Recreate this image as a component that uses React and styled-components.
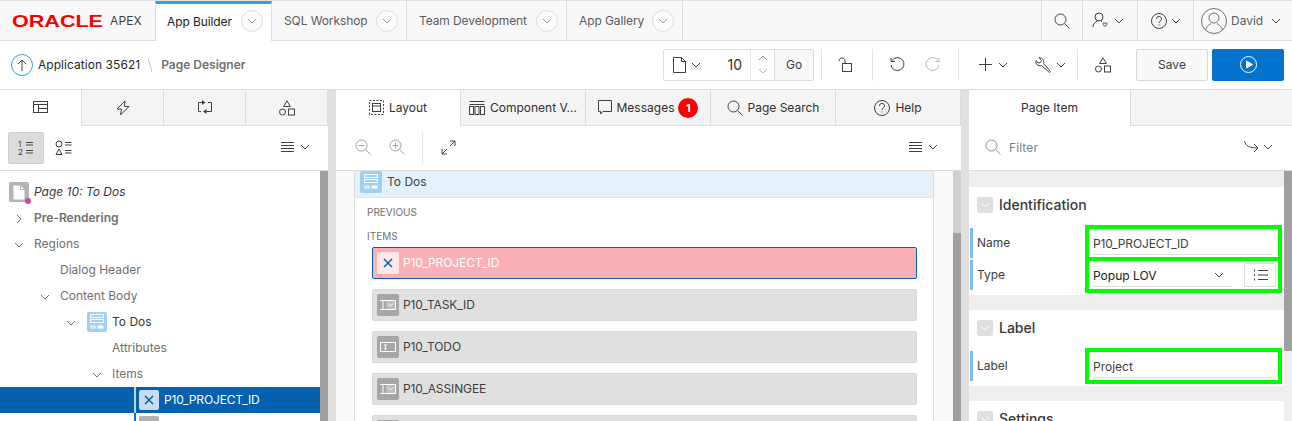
import React from "react";
import styled, { createGlobalStyle } from "styled-components";

const Global = createGlobalStyle`
  html, body { margin: 0; padding: 0; background: #fff; }
  body { font-family: Inter, "Liberation Sans", sans-serif; font-size: 12px; color: #404040; }
  * { box-sizing: border-box; }
`;

const Page = styled.div`
  width: 1292px; height: 421px; overflow: hidden; display: flex; flex-direction: column; background: #fff;
`;

/* ---------- icons ---------- */
const Svg = styled.svg`
  display: block; flex: none; fill: none; stroke: ${p => p.$c || "#404040"}; stroke-width: 1;
`;
const I = ({ w = 16, h = 16, c, children }) => (
  <Svg width={w} height={h} viewBox={`0 0 ${w} ${h}`} $c={c}>{children}</Svg>
);
const Chevron = ({ c, dir = "down" }) => (
  <I w={10} h={10} c={c}>
    {dir === "down" && <path d="M1 3l4 4 4-4" />}
    {dir === "right" && <path d="M3 1l4 4-4 4" />}
    {dir === "up" && <path d="M1 7l4-4 4 4" />}
  </I>
);
const Search = ({ c, sign }) => (
  <I w={16} h={16} c={c}>
    <circle cx="6.5" cy="6.5" r="5.5" /><path d="M10.5 10.5l5 5" />
    {sign && <path d="M3.500 6.500h6" />}
    {sign === "+" && <path d="M6.500 3.500v6" />}
  </I>
);
const Lines = () => (
  <I w={13} h={11}><path d="M0 .5h13M0 3.5h13M0 6.5h13M0 9.5h13" /></I>
);
const Shapes = () => (
  <I w={16} h={16}><path d="M8 .8l3.4 5.7H4.6z" /><circle cx="3.5" cy="12" r="3" /><rect x="9.5" y="9" width="6" height="6" /></I>
);
const RegionIcon = () => (
  <I w={16} h={16} c="#fff">
    <rect x="1.5" y=".5" width="13" height="3" /><rect x="1.5" y="5.5" width="13" height="3" />
    <rect x="2" y="12" width="4" height="2" /><rect x="9" y="12" width="5" height="2" fill="#fff" />
  </I>
);
const CrossIcon = ({ c = "#0560b0" }) => (
  <I w={12} h={12} c={c}><path d="M2 2l8 8M10 2l-8 8" strokeWidth="1.5" /></I>
);
const SelectIcon = () => (
  <I w={16} h={10} c="#fff">
    <path d="M0 .5h15.500v9H0M3 .5v9" />
    <rect x="6" y="1" width="9" height="8" fill="#fff" fillOpacity=".25" stroke="none" />
    <path d="M8 3.500l2.500 2.500L13 3.500" />
  </I>
);
const TextIcon = () => (
  <I w={16} h={10} c="#fff"><rect x=".5" y=".5" width="15" height="9" /><path d="M4 3h3M4 7h3M5.5 3v4" /></I>
);
const Numeral = styled.text`
  font-family: Inter, sans-serif; font-size: 8px; fill: #404040; stroke: none;
`;

/* ---------- top bar ---------- */
const TopBar = styled.header`
  display: flex; height: 41px; flex: none; background: #f8f8f8;
  border-top: 1px solid #dfe0e4; border-bottom: 1px solid #dcdcdc;
`;
const LogoBox = styled.div`
  width: 155px; display: flex; align-items: center; padding-left: 12px; gap: 7px;
`;
const LogoText = styled.text`
  fill: #f80000; stroke: none; font-family: "Liberation Sans", sans-serif; font-weight: 700; font-size: 16.5px;
`;
const ApexLabel = styled.span`
  font-size: 12px; color: #404040; letter-spacing: .1px;
`;
const NavTab = styled.div`
  width: ${p => p.$w}px; flex: none; display: flex; align-items: center; justify-content: space-between;
  padding: 0 8px 0 ${p => p.$pl}px; border-right: 1px solid #dcdcdc; border-left: ${p => p.$active ? "1px solid #dcdcdc" : "0"};
  font-size: 12px; letter-spacing: -.1px;
  color: ${p => p.$active ? "#202020" : "#5c5c5c"};
  background: ${p => p.$active ? "#fff" : "transparent"};
  border-top: ${p => p.$active ? "3px solid #3a9ee6" : "0"};
  margin-bottom: ${p => p.$active ? "-1px" : "0"};
  padding-bottom: ${p => p.$active ? "3px" : "0"};
`;
const CircleBtn = styled.span`
  width: 22px; height: 22px; border: 1px solid #dcdcdc; border-radius: 50%; background: #fbfbfb;
  display: flex; align-items: center; justify-content: center; flex: none;
`;
const Grow = styled.div`flex: 1;`;
const NavTool = styled.div`
  width: ${p => p.$w}px; flex: none; display: flex; align-items: center; justify-content: ${p => p.$start ? "flex-start" : "center"}; gap: ${p => p.$gap ?? 4}px;
  padding-left: ${p => p.$pl || 0}px; padding-right: ${p => p.$pr || 0}px;
  border-left: 1px solid #dcdcdc; color: #5c5c5c; font-size: 12px;
`;

/* ---------- page toolbar ---------- */
const ActionBar = styled.div`
  display: flex; align-items: center; height: 49px; flex: none; border-bottom: 1px solid #dcdcdc; padding: 0 8px 1px 11px; background: #fff;
`;
const Crumb = styled.span`
  font-size: 12px; color: #262626; margin-left: 5px; letter-spacing: .05px;
`;
const CrumbSep = styled.span`
  width: 7px; margin: 0 7px 0 7px; display: flex;
`;
const CrumbCurrent = styled.span`
  font-size: 12px; font-weight: 600; color: #707070;
`;
const PageNav = styled.div`
  display: flex; height: 32px; width: 151px; border: 1px solid #dcdcdc; border-radius: 2px; align-items: stretch;
`;
const PageType = styled.div`
  width: 54px; flex: none; display: flex; align-items: center; padding: 0 0 0 9px; gap: 5px;
`;
const PageNumber = styled.div`
  width: 24px; text-align: right; align-self: center; font-size: 14px; color: #303030;
`;
const Spin = styled.div`
  width: 24px; margin-left: 8px; border-left: 1px solid #e8e8e8; display: flex; flex-direction: column; align-items: center; justify-content: center; gap: 3px;
`;
const GoBtn = styled.div`
  flex: 1; border-left: 1px solid #dcdcdc; background: #f8f8f8; display: flex; align-items: center; justify-content: center; font-size: 12px; color: #404040;
`;
const ToolGroup = styled.div`
  width: ${p => p.$w}px; height: 32px; flex: none; display: flex; align-items: center; border-left: 1px solid #e2e2e2;
  padding-left: ${p => p.$pl}px; gap: ${p => p.$gap || 0}px; margin-left: ${p => p.$ml || 0}px;
`;
const ToolPair = styled.span`
  display: flex; align-items: center; gap: ${p => p.$gap || 6}px;
`;
const SaveBtn = styled.div`
  width: 72px; height: 32px; border: 1px solid #d8d8d8; border-radius: 2px; background: #f8f8f8; display: flex; align-items: center; justify-content: center; font-size: 12px; color: #404040; margin: 0 4px 0 8px; flex: none;
`;
const RunBtn = styled.div`
  width: 72px; height: 32px; background: #0572ce; border-radius: 2px; display: flex; align-items: center; justify-content: center; flex: none;
`;

/* ---------- panels ---------- */
const Panels = styled.main`
  flex: 1; display: flex; min-height: 0;
`;
const Panel = styled.section`
  width: ${p => p.$w}px; flex: none; display: flex; flex-direction: column; min-height: 0;
`;
const Splitter = styled.div`
  width: 8px; flex: none; background: #e0e0e0;
`;
const TabStrip = styled.div`
  display: flex; height: 36px; flex: none; background: #f4f4f4; border-bottom: 1px solid #dcdcdc;
`;
const PanelTab = styled.div`
  width: ${p => p.$w}px; flex: none; display: flex; align-items: center; justify-content: center; gap: 5px;
  border-right: 1px solid #dcdcdc; font-size: 12px; color: #303030;
  ${p => p.$active && "background:#fff; height:36px; padding-bottom:1px;"}
`;
const Badge = styled.span`
  width: 20px; height: 20px; border-radius: 50%; background: #f00; color: #fff; font-weight: 700; font-size: 11px; margin-left: -1px;
  display: flex; align-items: center; justify-content: center;
`;
const Toolbar = styled.div`
  height: 45px; flex: none; display: flex; align-items: center; border-bottom: 1px solid #dcdcdc; padding: 0 ${p => p.$pr ?? 18}px 2px ${p => p.$pl ?? 8}px; background: #fff;
`;
const ToggleBtn = styled.div`
  width: 36px; height: 32px; border-radius: 2px; background: ${p => p.$on ? "#dcdcdc" : "transparent"}; border: 1px solid ${p => p.$on ? "#cfcfcf" : "transparent"};
  display: flex; align-items: center; justify-content: center; margin: 2px 1px 0 0;
`;
const ToolSep = styled.div`
  width: 1px; height: 32px; background: #e2e2e2; margin: 2px ${p => p.$r}px 0 ${p => p.$l}px;
`;
const IconSlot = styled.span`
  margin-right: ${p => p.$mr || 0}px; display: flex;
`;
const Scrollbar = styled.div`
  width: 8px; flex: none; display: flex; flex-direction: column; background: ${p => p.$bg || "#a0a0a0"};
`;
const ScrollPart = styled.div`
  height: ${p => p.$h}px; flex: none; background: ${p => p.$c};
`;

/* ---------- tree ---------- */
const TreeWrap = styled.div`
  flex: 1; display: flex; min-height: 0;
`;
const Tree = styled.div`
  flex: 1; padding-top: 8px; overflow: hidden; background: #fff;
`;
const TreeRow = styled.div`
  height: 26px; display: flex; align-items: center; padding: 0 0 2px ${p => p.$pad}px; font-size: 12px;
  letter-spacing: ${p => p.$caps ? "-.15px" : "0"};
  color: ${p => p.$sel ? "#fff" : p.$dark ? "#383838" : "#707070"};
  background: ${p => p.$sel ? "#0560b0" : "transparent"};
  font-style: ${p => p.$italic ? "italic" : "normal"};
  font-weight: ${p => p.$bold ? 600 : 400};
`;
const Twist = styled.span`
  width: 26px; height: 100%; flex: none; display: flex; align-items: center; justify-content: center; padding: 3px 4px 0 0;
`;
const Guide = styled.span`
  width: 24px; height: 26px; align-self: flex-start; flex: none; margin-right: 3px; border-right: 2px solid ${p => p.$c};
`;
const NodeIcon = styled.span`
  width: 20px; height: 20px; flex: none; border-radius: 2px; background: ${p => p.$c}; display: flex; align-items: center; justify-content: center; margin: 2px 5px 0 ${p => p.$ml || 0}px; position: relative;
`;
const Dot = styled.span`
  position: absolute; right: -2px; bottom: -2px; width: 6px; height: 6px; border-radius: 50%; background: #c74b9a;
`;

/* ---------- layout canvas ---------- */
const CanvasWrap = styled.div`
  flex: 1; display: flex; min-height: 0;
`;
const Canvas = styled.div`
  flex: 1; background: #f9f9f9; padding: 0 19px 0 18px; overflow: hidden;
`;
const RegionCard = styled.div`
  background: #fff; border: 1px solid #dcdcdc; border-top: 0; height: 400px;
`;
const RegionHead = styled.div`
  height: 27px; background: #e4f1fb; border-bottom: 1px solid #d8e6f1; display: flex; align-items: flex-start; padding-left: 5px; gap: 5px; font-size: 12px; color: #404040;
`;
const RegionText = styled.span`line-height: 21px;`;
const HeadIcon = styled.span`
  width: 22px; height: 22px; border-radius: 2px; background: #a0d0f5; display: flex; align-items: center; justify-content: center;
`;
const SlotLabel = styled.div`
  font-size: 10px; color: #707070; padding-left: 12px; line-height: 12px; margin-top: ${p => p.$mt}px;
`;
const Items = styled.div`
  display: flex; flex-direction: column; gap: 10px; padding: 5px 16px 0 17px;
`;
const ItemCard = styled.div`
  height: 32px; flex: none; border-radius: 2px; display: flex; align-items: center; padding: 0 0 2px 4px; gap: 4px; font-size: 12px; letter-spacing: -.1px;
  background: ${p => p.$sel ? "#fab0b4" : "#e0e0e0"};
  border: 1px solid ${p => p.$sel ? "#0560b0" : "#d8d8d8"};
  color: ${p => p.$sel ? "#fff" : "#404040"};
`;
const ItemIcon = styled.span`
  width: 22px; height: 22px; margin-top: 2px; border-radius: 2px; background: ${p => p.$sel ? "#fde8e9" : "#a6a6a6"}; display: flex; align-items: center; justify-content: center; flex: none;
`;

/* ---------- properties ---------- */
const PropsWrap = styled.div`
  flex: 1; display: flex; min-height: 0;
`;
const Props = styled.div`
  flex: 1; background: #eee; padding-top: 16px; display: flex; flex-direction: column; gap: 15px; overflow: hidden;
`;
const Group = styled.div`
  background: #fff; padding-bottom: 4px; flex: none;
`;
const GroupHead = styled.div`
  height: 40px; display: flex; align-items: flex-start; padding: 10px 0 0 8px; gap: 6px; font-size: 14px; font-weight: 500; color: #383838;
`;
const GroupTitle = styled.span`line-height: 16px;`;
const Collapse = styled.span`
  width: 16px; height: 16px; border-radius: 2px; background: #dedede; display: flex; align-items: center; justify-content: center;
`;
const PropRow = styled.div`
  height: 32px; display: flex; align-items: center; padding: 0 6px 0 1px;
`;
const Mark = styled.span`
  width: 3px; height: 30px; background: #7fbcea; flex: none;
`;
const PropLabel = styled.label`
  flex: 1; padding-left: 4px; font-size: 12px; color: #404040; margin-top: -1px;
`;
const Field = styled.div`
  width: 189px; height: 28px; outline: 4px solid #00ff00; display: flex; align-items: flex-start; padding: 0 ${p => p.$pr ?? 6}px 0 4px; gap: 12px; font-size: 12px; color: #404040; position: relative; z-index: ${p => p.$z || 0}; background: #fff;
`;
const Value = styled.div`
  flex: 1; border-bottom: 1px solid #e0e0e0; display: flex; align-items: center; justify-content: space-between; height: 26px; padding: 3px 8px 0 0; letter-spacing: ${p => p.$caps ? "-.15px" : "0"}; color: ${p => p.$dark ? "#202020" : "#404040"};
`;
const ListBtn = styled.div`
  width: 32px; height: 24px; margin-top: 2px; border: 1px solid #dcdcdc; border-radius: 2px; display: flex; align-items: center; justify-content: center; flex: none;
`;
const FilterText = styled.span`
  font-size: 12px; color: #808080; margin-left: 8px; letter-spacing: .1px;
`;

/* ---------- app ---------- */
const NAV = [
  { t: "App Builder", w: 117, pl: 11, active: true },
  { t: "SQL Workshop", w: 135, pl: 12 },
  { t: "Team Development", w: 160, pl: 12 },
  { t: "App Gallery", w: 116, pl: 12 },
];
const MenuChevron = () => (
  <ToolPair $gap={6}><Lines /><Chevron /></ToolPair>
);

export default function App() {
  return (
    <Page>
      <Global />
      <TopBar>
        <LogoBox>
          <svg width="91" height="16" viewBox="0 0 91 16">
            <LogoText x="0" y="14" textLength="91" lengthAdjust="spacingAndGlyphs">ORACLE</LogoText>
          </svg>
          <ApexLabel>APEX</ApexLabel>
        </LogoBox>
        {NAV.map(n => (
          <NavTab key={n.t} $w={n.w} $pl={n.pl} $active={n.active}>
            {n.t}
            <CircleBtn><Chevron c="#9a9a9a" /></CircleBtn>
          </NavTab>
        ))}
        <Grow />
        <NavTool $w={41}><Search /></NavTool>
        <NavTool $w={55} $pr={4}>
          <I w={18} h={18}>
            <circle cx="7" cy="5" r="4" /><path d="M1 15c0-3 2-5 4.500-6M9 9l1 1" />
            <path d="M13 11.500c1-1.500 3 0 1.500 1.500L13 14.500 11.500 13c-1.500-1.500 .5-3 1.500-1.500z" />
          </I>
          <Chevron />
        </NavTool>
        <NavTool $w={56}>
          <I w={16} h={16}><circle cx="8" cy="8" r="7.500" /><path d="M5.500 6c0-3.500 5-3.500 5 0 0 2-2.500 2-2.500 4M8 11.500v1" /></I>
          <Chevron />
        </NavTool>
        <NavTool $w={99} $gap={4} $start $pl={7}>
          <I w={26} h={26} c="#707070">
            <circle cx="13" cy="13" r="12.500" /><circle cx="13" cy="10" r="5" /><path d="M4.500 22c1-4 4-5.500 5.500-6.500M21.500 22c-1-4-4-5.500-5.500-6.500" />
          </I>
          David
          <IconSlot style={{ marginLeft: 4 }}><Chevron /></IconSlot>
        </NavTool>
      </TopBar>

      <ActionBar>
        <I w={22} h={22} c="#3a9ee6">
          <circle cx="11" cy="11" r="10.500" />
          <path d="M11 17V6M7 10l4-4 4 4" stroke="#404040" />
        </I>
        <Crumb>Application 35621</Crumb>
        <CrumbSep><I w={7} h={16} c="#c8c8c8"><path d="M1 1l4 14" /></I></CrumbSep>
        <CrumbCurrent>Page Designer</CrumbCurrent>
        <Grow />
        <PageNav>
          <PageType>
            <I w={13} h={16}><path d="M.5 .5h8l4 4v11H.5zM8.500 .5v4h4" /></I>
            <Chevron />
          </PageType>
          <PageNumber>10</PageNumber>
          <Spin><Chevron dir="up" c="#909090" /><Chevron c="#b8b8b8" /></Spin>
          <GoBtn>Go</GoBtn>
        </PageNav>
        <ToolGroup $w={51} $pl={16} $ml={7}>
          <I w={15} h={16}><rect x="4.500" y="6.500" width="9" height="8" /><path d="M1 4c0-4 6-4 6 0v2.500" /></I>
        </ToolGroup>
        <ToolGroup $w={86} $pl={17} $gap={20}>
          <I w={15} h={15}><path d="M2 3.500A6.500 6.500 0 1 1 1 8" /><path d="M1 1v3.500h4" /></I>
          <I w={15} h={15} c="#b8b8b8"><path d="M13 3.500A6.500 6.500 0 1 0 14 8" /><path d="M14 1v3.500h-4" /></I>
        </ToolGroup>
        <ToolGroup $w={119} $pl={20} $gap={27}>
          <ToolPair $gap={6}>
            <I w={13} h={13}><path d="M6.500 0v13M0 6.500h13" /></I>
            <Chevron />
          </ToolPair>
          <ToolPair $gap={5}>
            <I w={16} h={16}><path d="M14.500 15.500l1-1L8.500 6.500C9.500 3.500 7.500 .5 4 .8L6.500 3.500 5.500 5.500 3 6 1 3.500C0 7 3 9.500 6.500 8.500z" /></I>
            <Chevron />
          </ToolPair>
        </ToolGroup>
        <ToolGroup $w={51} $pl={17}><Shapes /></ToolGroup>
        <SaveBtn>Save</SaveBtn>
        <RunBtn>
          <I w={17} h={17} c="#fff">
            <circle cx="8.500" cy="8.500" r="8" /><path d="M6.500 5l6 3.500-6 3.500z" fill="#fff" />
          </I>
        </RunBtn>
      </ActionBar>

      <Panels>
        <Panel $w={328}>
          <TabStrip>
            <PanelTab $w={82} $active>
              <I w={15} h={13}><rect x=".5" y=".5" width="14" height="11" /><path d="M.5 3.500h14M5.500 3.500v8M5.500 7.500h9" /></I>
            </PanelTab>
            <PanelTab $w={82}>
              <I w={14} h={16}><path d="M9 1L1 9h4.500l-1 6L13 6.500H8.500z" /></I>
            </PanelTab>
            <PanelTab $w={82}>
              <I w={16} h={15}>
                <path d="M5 2.500H1.500v9H4M11 2.500h3.500v9H9" />
                <path d="M5 0l3.500 2.500L5 5z" fill="#404040" stroke="none" />
                <path d="M9.500 9L6 11.500 9.500 14z" fill="#404040" stroke="none" />
              </I>
            </PanelTab>
            <PanelTab $w={82}><Shapes /></PanelTab>
          </TabStrip>
          <Toolbar>
            <ToggleBtn $on>
              <I w={16} h={16}>
                <Numeral x="0" y="7">1</Numeral><Numeral x="0" y="15">2</Numeral>
                <path d="M8 2.500h7M8 5h7M8 10.500h7M8 13h7" />
              </I>
            </ToggleBtn>
            <ToggleBtn>
              <I w={17} h={16}><circle cx="4" cy="4" r="3" /><path d="M4 9l3 5.500H1zM10 2.500h6.500M10 5h6.500M10 10.500h6.500M10 13h6.500" /></I>
            </ToggleBtn>
            <Grow />
            <MenuChevron />
          </Toolbar>
          <TreeWrap>
            <Tree>
              <TreeRow $pad={9} $italic $dark>
                <NodeIcon $c="#b3b3b3">
                  <I w={12} h={15} c="#b3b3b3"><path d="M.5 .5h7l4 4v10H.5z" fill="#fff" stroke="none" /><path d="M7.500 .5v4h4" /></I>
                  <Dot />
                </NodeIcon>
                Page 10: To Dos
              </TreeRow>
              <TreeRow $pad={8} $bold><Twist><Chevron c="#707070" dir="right" /></Twist>Pre-Rendering</TreeRow>
              <TreeRow $pad={8}><Twist><Chevron c="#707070" /></Twist>Regions</TreeRow>
              <TreeRow $pad={60}>Dialog Header</TreeRow>
              <TreeRow $pad={34}><Twist><Chevron c="#707070" /></Twist>Content Body</TreeRow>
              <TreeRow $pad={60} $dark>
                <Twist><Chevron c="#707070" /></Twist>
                <NodeIcon $c="#a0d0f5" $ml={1}><RegionIcon /></NodeIcon>
                To Dos
              </TreeRow>
              <TreeRow $pad={112}>Attributes</TreeRow>
              <TreeRow $pad={86}><Twist><Chevron c="#707070" /></Twist>Items</TreeRow>
              <TreeRow $pad={112} $sel $caps>
                <Guide $c="#b9d6ee" />
                <NodeIcon $c="#c5dcef"><CrossIcon /></NodeIcon>
                P10_PROJECT_ID
              </TreeRow>
              <TreeRow $pad={112} $caps>
                <Guide $c="#0572ce" />
                <NodeIcon $c="#b3b3b3"><SelectIcon /></NodeIcon>
                P10_TASK_ID
              </TreeRow>
            </Tree>
            <Scrollbar />
          </TreeWrap>
        </Panel>
        <Splitter />

        <Panel $w={625}>
          <TabStrip>
            <PanelTab $w={125} $active>
              <I w={15} h={15}><rect x=".5" y=".5" width="14" height="14" strokeDasharray="2 1.500" /><rect x="3.500" y="3.500" width="8" height="8" /><path d="M3.500 6h8" /></I>
              Layout
            </PanelTab>
            <PanelTab $w={125}>
              <I w={16} h={15}><path d="M.5 1.500h15M.5 4.500h15" /><rect x=".5" y="6.500" width="4" height="8" /><rect x="6" y="6.500" width="4" height="8" /><rect x="11.500" y="6.500" width="4" height="8" /></I>
              Component V...
            </PanelTab>
            <PanelTab $w={125}>
              <I w={14} h={15}><path d="M.5 .5h13v11H5L2.500 14v-2.500h-2z" /></I>
              Messages
              <Badge>1</Badge>
            </PanelTab>
            <PanelTab $w={125}><Search />Page Search</PanelTab>
            <PanelTab $w={125}>
              <I w={16} h={16}><circle cx="8" cy="8" r="7.500" /><path d="M5.500 6c0-3.500 5-3.500 5 0 0 2-2.500 2-2.500 4M8 11.500v1" /></I>
              Help
            </PanelTab>
          </TabStrip>
          <Toolbar $pl={19} $pr={23}>
            <IconSlot $mr={18}><Search c="#a0a0a0" sign="-" /></IconSlot>
            <Search c="#a0a0a0" sign="+" />
            <ToolSep $l={17} $r={18} />
            <I w={15} h={15}><path d="M9 1h5v5M14 1L9 6M1 9v5h5M1 14l5-5" /></I>
            <Grow />
            <MenuChevron />
          </Toolbar>
          <CanvasWrap>
            <Canvas>
              <RegionCard>
                <RegionHead>
                  <HeadIcon><RegionIcon /></HeadIcon>
                  <RegionText>To Dos</RegionText>
                </RegionHead>
                <SlotLabel $mt={8}>PREVIOUS</SlotLabel>
                <SlotLabel $mt={12}>ITEMS</SlotLabel>
                <Items>
                  <ItemCard $sel><ItemIcon $sel><CrossIcon /></ItemIcon>P10_PROJECT_ID</ItemCard>
                  <ItemCard><ItemIcon><SelectIcon /></ItemIcon>P10_TASK_ID</ItemCard>
                  <ItemCard><ItemIcon><TextIcon /></ItemIcon>P10_TODO</ItemCard>
                  <ItemCard><ItemIcon><SelectIcon /></ItemIcon>P10_ASSINGEE</ItemCard>
                  <ItemCard><ItemIcon><TextIcon /></ItemIcon></ItemCard>
                </Items>
              </RegionCard>
            </Canvas>
            <Scrollbar><ScrollPart $h={62} $c="#cfcfcf" /></Scrollbar>
          </CanvasWrap>
        </Panel>
        <Splitter />

        <Panel $w={323}>
          <TabStrip>
            <PanelTab $w={162} $active>Page Item</PanelTab>
          </TabStrip>
          <Toolbar $pl={16} $pr={19}>
            <Search c="#909090" />
            <FilterText>Filter</FilterText>
            <Grow />
            <ToolPair $gap={4}>
              <I w={15} h={14}><path d="M.5 1c1 5 5 7 13 7M10 4l4 4-4 4" /></I>
              <Chevron />
            </ToolPair>
          </Toolbar>
          <PropsWrap>
            <Props>
              <Group>
                <GroupHead><Collapse><Chevron c="#fff" /></Collapse><GroupTitle>Identification</GroupTitle></GroupHead>
                <PropRow>
                  <Mark /><PropLabel>Name</PropLabel>
                  <Field><Value $caps>P10_PROJECT_ID</Value></Field>
                </PropRow>
                <PropRow>
                  <Mark /><PropLabel>Type</PropLabel>
                  <Field $pr={2} $z={1}>
                    <Value $dark>Popup LOV<Chevron /></Value>
                    <ListBtn>
                      <I w={15} h={12}><path d="M5 1.500h10M5 6h10M5 10.500h10" /><path d="M1 1.500h1M1 6h1M1 10.500h1" strokeWidth="2" /></I>
                    </ListBtn>
                  </Field>
                </PropRow>
              </Group>
              <Group>
                <GroupHead><Collapse><Chevron c="#fff" /></Collapse><GroupTitle>Label</GroupTitle></GroupHead>
                <PropRow>
                  <Mark /><PropLabel>Label</PropLabel>
                  <Field><Value>Project</Value></Field>
                </PropRow>
              </Group>
              <Group>
                <GroupHead><Collapse><Chevron c="#fff" /></Collapse><GroupTitle>Settings</GroupTitle></GroupHead>
              </Group>
            </Props>
            <Scrollbar $bg="#eee"><ScrollPart $h={180} $c="#a0a0a0" /></Scrollbar>
          </PropsWrap>
        </Panel>
      </Panels>
    </Page>
  );
}
